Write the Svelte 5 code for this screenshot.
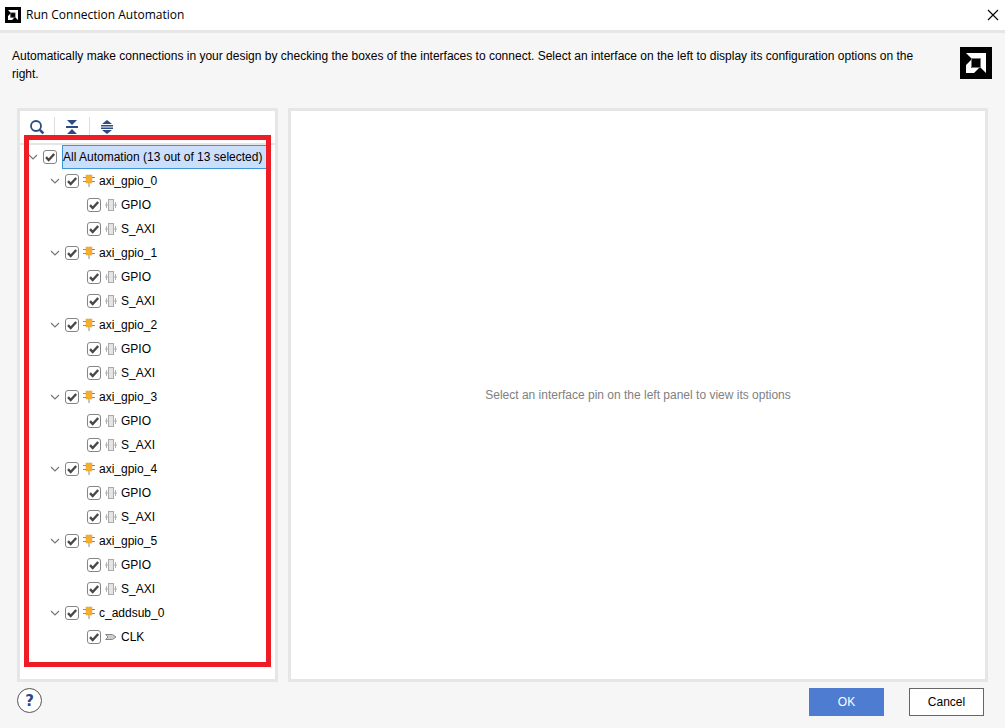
<script>
  let groups = $state([
    ...[0, 1, 2, 3, 4, 5].map((n) => ({
      name: `axi_gpio_${n}`,
      open: true,
      pins: [
        { name: 'GPIO', kind: 'bus', checked: true },
        { name: 'S_AXI', kind: 'bus', checked: true },
      ],
    })),
    { name: 'c_addsub_0', open: true, pins: [{ name: 'CLK', kind: 'clock', checked: true }] },
  ]);
  let rootOpen = $state(true);

  let pins = $derived(groups.flatMap((g) => g.pins));
  let selected = $derived(pins.filter((p) => p.checked).length);

  function setAll(list, value) {
    for (const pin of list) pin.checked = value;
  }
  function setOpen(value) {
    for (const group of groups) group.open = value;
  }
</script>

{#snippet logo()}
  <svg class="logo" viewBox="0 0 32 32" aria-hidden="true">
    <rect width="32" height="32" fill="#000" />
    <path d="M6 6H26V26L20 20V12H12Z" fill="#fff" />
    <path d="M11 13V21H19L14 26H6V18Z" fill="#fff" />
    <path d="M11.5 20.5V11.5H20.5V20.5Z" fill="#000" stroke="#777" />
  </svg>
{/snippet}

{#snippet twisty(open, toggle, name)}
  <button class="twisty" class:closed={!open} onclick={toggle} aria-label={`Toggle ${name}`}>
    <svg width="10" height="6" viewBox="0 0 10 6"><path d="M1 1L5 5L9 1" fill="none" stroke="#777" stroke-width="1.2" /></svg>
  </button>
{/snippet}

{#snippet box(id, checked, change)}
  <span class="box">
    <input type="checkbox" {id} {checked} onchange={(e) => change(e.currentTarget.checked)} />
    {#if checked}
      <svg width="14" height="14" viewBox="0 0 14 14" aria-hidden="true"><path d="M3 7.2L5.7 10L11.2 4" fill="none" stroke="#484848" stroke-width="2.4" /></svg>
    {/if}
  </span>
{/snippet}

<main class="dialog">
  <header class="titlebar">
    {@render logo()}
    <h1>Run Connection Automation</h1>
    <button class="close" aria-label="Close">
      <svg width="12" height="12" viewBox="0 0 12 12"><path d="M1 1L11 11M11 1L1 11" stroke="#000" stroke-width="1.1" /></svg>
    </button>
  </header>

  <section class="intro">
    <p>Automatically make connections in your design by checking the boxes of the interfaces to connect. Select an interface on the left to display its configuration options on the right.</p>
    {@render logo()}
  </section>

  <div class="panes">
    <section class="pane left">
      <div class="toolbar">
        <button aria-label="Search">
          <svg width="16" height="16" viewBox="0 0 16 16" fill="none" stroke="#2c4a84"><circle cx="7" cy="7" r="5" stroke-width="1.8" /><path d="M10.8 10.8L14.4 14.4" stroke-width="2.6" /></svg>
        </button>
        <button aria-label="Collapse all" onclick={() => setOpen(false)}>
          <svg width="16" height="16" viewBox="0 0 16 16" fill="#2c4a84"><path d="M3 1H13L8 6ZM2 7H14V9H2ZM3 15H13L8 10Z" /></svg>
        </button>
        <button aria-label="Expand all" onclick={() => setOpen(true)}>
          <svg width="16" height="16" viewBox="0 0 16 16" fill="#2c4a84"><path d="M3 5H13L8 1ZM2 6H14V7.5H2ZM2 8.5H14V10H2ZM3 11H13L8 15Z" /></svg>
        </button>
      </div>

      <div class="tree">
        <div class="row">
          {@render twisty(rootOpen, () => (rootOpen = !rootOpen), 'All Automation')}
          {@render box('all', selected === pins.length, (v) => setAll(pins, v))}
          <label class="current" for="all">All Automation ({selected} out of {pins.length} selected)</label>
        </div>
        {#if rootOpen}
          {#each groups as group}
            <div class="row block">
              {@render twisty(group.open, () => (group.open = !group.open), group.name)}
              {@render box(group.name, group.pins.every((p) => p.checked), (v) => setAll(group.pins, v))}
              <svg class="icon" width="12" height="14" viewBox="0 0 12 14" aria-hidden="true">
                <path d="M0 3.5H12M0 7.5H12M6 9V13" stroke="#8c8c8c" />
                <rect x="3" y="1" width="6" height="8" fill="#f9ae2b" stroke="#d9a040" stroke-width=".5" />
              </svg>
              <label for={group.name}>{group.name}</label>
            </div>
            {#if group.open}
              {#each group.pins as pin}
                <div class="row pin">
                  {@render box(`${group.name}/${pin.name}`, pin.checked, (v) => (pin.checked = v))}
                  {#if pin.kind === 'bus'}
                    <svg class="icon" width="12" height="14" viewBox="0 0 12 14" aria-hidden="true">
                      <path d="M1.5 4V10M10.5 4V10M0 7H3M9 7H12" fill="none" stroke="#b0b0b0" />
                      <rect x="3.5" y="1.5" width="5" height="11" fill="#e4e4e4" stroke="#aaa" />
                    </svg>
                  {:else}
                    <svg class="icon" width="12" height="14" viewBox="0 0 12 14" aria-hidden="true">
                      <path d="M.5 4.5H7.5L11 7L7.5 9.5H.5L3 7Z" fill="#ccc" stroke="#888" />
                    </svg>
                  {/if}
                  <label for={`${group.name}/${pin.name}`}>{pin.name}</label>
                </div>
              {/each}
            {/if}
          {/each}
        {/if}
      </div>
      <div class="marker"></div>
    </section>

    <section class="pane options">
      <p>Select an interface pin on the left panel to view its options</p>
    </section>
  </div>

  <footer>
    <button class="help" aria-label="Help">?</button>
    <button class="action primary">OK</button>
    <button class="action">Cancel</button>
  </footer>
</main>

<style>
  :global(body) { margin: 0; }
  .dialog {
    box-sizing: border-box;
    min-height: 100vh;
    display: flex;
    flex-direction: column;
    background: #f6f6f6;
    color: #000;
    font: 12px/18px "Liberation Sans", Arial, sans-serif;
  }
  svg { display: block; flex: none; }
  p, h1 { margin: 0; }
  button {
    padding: 0;
    border: 0;
    background: none;
    color: inherit;
    font: inherit;
  }
  .titlebar {
    display: flex;
    align-items: center;
    gap: 5px;
    height: 30px;
    padding: 0 6px 0 5px;
    background: #fff;
    border-bottom: 3px solid #e6e6e6;
  }
  .titlebar .logo { width: 16px; height: 16px; }
  h1 {
    flex: 1;
    font: 12px/18px "Open Sans", "Noto Sans", sans-serif;
  }
  .intro {
    display: flex;
    justify-content: space-between;
    gap: 24px;
    padding: 14px 13px 25px 12px;
  }
  .intro .logo { width: 32px; height: 32px; }
  .panes {
    flex: 1;
    display: grid;
    grid-template-columns: 261px 1fr;
    gap: 10px;
    padding: 0 17px;
  }
  .pane {
    position: relative;
    min-width: 0;
    background: #fff;
    border: 3px solid #e6e6e6;
  }
  .toolbar {
    display: flex;
    align-items: center;
    height: 32px;
    border-bottom: 2px solid #e6e6e6;
  }
  .toolbar button {
    display: grid;
    place-items: center;
    width: 35px;
    height: 20px;
    border-right: 1px solid #ddd;
  }
  .toolbar button:last-child { border-color: transparent; }
  .row {
    display: flex;
    align-items: center;
    height: 24px;
    padding: 0 7px 0 8px;
  }
  .block { padding-left: 30px; }
  .pin { padding-left: 67px; }
  .twisty {
    width: 10px;
    height: 16px;
    margin-right: 5px;
  }
  .twisty svg { margin: auto; }
  .closed svg { transform: rotate(-90deg); }
  .box { display: grid; margin-right: 4px; }
  .box > * { grid-area: 1 / 1; }
  .box svg { pointer-events: none; }
  input {
    appearance: none;
    box-sizing: border-box;
    width: 14px;
    height: 14px;
    margin: 0;
    border: 1px solid #858585;
    border-radius: 3px;
    background: #fff;
  }
  .icon { margin-right: 4px; }
  .row label { white-space: nowrap; }
  .row .current {
    flex: 1;
    box-sizing: border-box;
    height: 24px;
    margin-left: 1px;
    line-height: 22px;
    border: 1px solid #3c96dc;
    background: #cbdffd;
  }
  .marker {
    position: absolute;
    inset: 24px 4px 12px 4px;
    border: 5px solid #ee1c25;
    pointer-events: none;
  }
  .options {
    display: grid;
    place-items: center;
    color: #808080;
  }
  footer {
    display: flex;
    gap: 25px;
    padding: 6px 21px 12px 17px;
  }
  .help {
    box-sizing: border-box;
    width: 25px;
    height: 25px;
    margin-right: auto;
    border: 1px solid #555;
    border-radius: 50%;
    background: #fff;
    color: #2c4a84;
    font: bold 15px/20px "DejaVu Sans", sans-serif;
  }
  .action {
    box-sizing: border-box;
    width: 75px;
    height: 28px;
    border: 1px solid #666;
    background: #fff;
  }
  .primary {
    border-color: #4e7cd1;
    background: #4e7cd1;
    color: #fff;
  }
</style>
